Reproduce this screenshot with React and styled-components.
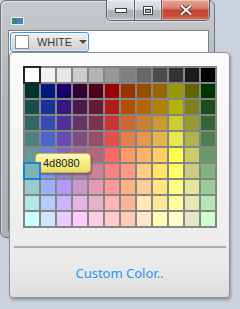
import React from 'react';
import styled, { createGlobalStyle } from 'styled-components';

const GlobalStyle = createGlobalStyle`
    html, body {
        margin: 0;
        padding: 0;
        background: #cbd3df;
    }
`

const RAW = [
    255,255,255, 242,242,242, 230,230,230, 204,204,204, 179,179,179, 153,153,153,
    128,128,128, 102,102,102, 77,77,77, 51,51,51, 26,26,26, 0,0,0,
    0,51,51, 0,26,128, 26,0,104, 51,0,51, 77,0,26, 153,0,0,
    153,51,0, 153,77,0, 153,102,0, 153,153,0, 102,102,0, 0,51,0,
    26,77,77, 26,51,153, 51,26,128, 77,26,77, 102,26,51, 179,26,26,
    179,77,0, 179,102,0, 179,128,0, 179,179,0, 128,128,26, 26,77,26,
    51,102,102, 51,77,179, 77,51,153, 102,51,102, 128,51,77, 204,51,51,
    204,102,51, 204,128,51, 204,153,51, 204,204,51, 153,153,51, 51,102,51,
    77,128,128, 77,102,204, 102,77,179, 128,77,128, 153,77,102, 230,77,77,
    230,128,77, 230,153,77, 230,179,77, 230,230,77, 179,179,77, 77,128,77,
    102,153,153, 102,128,230, 128,102,204, 153,102,153, 179,102,128, 255,102,102,
    255,153,102, 255,179,102, 255,204,102, 255,255,77, 204,204,102, 102,153,102,
    128,179,179, 128,153,255, 153,128,230, 179,128,179, 204,128,153, 255,128,128,
    255,153,128, 255,204,128, 255,230,102, 255,255,102, 204,204,128, 128,179,128,
    153,204,204, 153,179,255, 179,153,255, 204,153,204, 230,153,179, 255,153,153,
    255,179,128, 255,204,153, 255,230,128, 255,255,128, 230,230,153, 153,204,153,
    179,230,230, 179,204,255, 204,179,255, 230,179,230, 230,179,204, 255,179,179,
    255,179,153, 255,230,179, 255,230,153, 255,255,153, 230,230,179, 179,230,179,
    204,255,255, 204,230,255, 230,204,255, 255,204,255, 255,204,230, 255,204,204,
    255,204,179, 255,230,204, 255,255,179, 255,255,204, 230,230,204, 204,255,204,
];

const COLORS = [];
for (let i = 0; i < RAW.length; i += 3) {
    COLORS.push(`rgb(${RAW[i]}, ${RAW[i + 1]}, ${RAW[i + 2]})`);
}

const Desktop = styled.div`
    position: relative;
    width: 240px;
    height: 309px;
    overflow: hidden;
    background: #cbd3df;
`

const Window = styled.div`
    width: 215px;
    height: 238px;
    display: flex;
    flex-direction: column;
    box-sizing: border-box;
    border: 1px solid #6e7379;
    border-radius: 6px;
    background: linear-gradient(#c6cacf, #b2b6bc 40%, #aeb2b8);
    box-shadow: inset 1px 1px 0 rgba(255,255,255,0.45);
`

const TitleBar = styled.div`
    height: 29px;
    display: flex;
    justify-content: space-between;
    align-items: flex-start;
    padding-left: 9px;
    padding-right: 4px;
`

const AppIcon = styled.div`
    margin-top: 11px;
`

const Caption = styled.div`
    display: flex;
    margin-top: -1px;
    border: 1px solid #5c6066;
    border-top: none;
    border-radius: 0 0 5px 5px;
    overflow: hidden;
    box-shadow: 0 1px 0 rgba(255,255,255,0.5);
`

const CapButton = styled.div`
    width: ${p => p.$w}px;
    height: 20px;
    display: flex;
    align-items: center;
    justify-content: center;
    border-left: ${p => p.$first ? 'none' : '1px solid #5c6066'};
    background: ${p => p.$close
        ? 'linear-gradient(#e6a799 0%, #d7816f 40%, #c4432d 52%, #c2503c 80%, #d07a66 100%)'
        : 'linear-gradient(#e4e6e9 0%, #d3d6da 45%, #b1b5ba 52%, #adb1b6 80%, #c3c6ca 100%)'};
    box-shadow: inset 0 0 0 1px rgba(255,255,255,0.35);
`

const Client = styled.div`
    flex: 1;
    margin: 0 5px 6px 7px;
    background: #ffffff;
    border: 1px solid #7a7f86;
    padding: 1px 0 0 1px;
`

const Combo = styled.div`
    width: 79px;
    height: 20px;
    box-sizing: border-box;
    display: flex;
    align-items: center;
    gap: 8px;
    padding-left: 4px;
    border: 1px solid #3d95e0;
    border-radius: 3px;
    background: linear-gradient(#f2f2f2, #dcdcdc 55%, #cfcfcf);
    box-shadow: inset 0 0 0 1px rgba(255,255,255,0.6);
`

const Swatch = styled.div`
    width: 12px;
    height: 12px;
    background: ${p => p.$color};
    border: 1px solid #8c8c8c;
`

const ComboText = styled.span`
    font-family: "Liberation Sans", Arial, sans-serif;
    font-size: 11px;
    color: #3a3a3a;
    letter-spacing: -0.1px;
`

const Arrow = styled.div`
    width: 0;
    height: 0;
    margin-left: -1px;
    border-left: 4px solid transparent;
    border-right: 4px solid transparent;
    border-top: 4px solid #4a4a4a;
`

const Popup = styled.div`
    position: absolute;
    left: 9px;
    top: 52px;
    width: 221px;
    height: 246px;
    box-sizing: border-box;
    padding: 13px 0 0 13px;
    border: 1px solid #8f8f8f;
    border-radius: 4px;
    background: linear-gradient(#fbfbfb, #f0f0f0 60%, #ebebeb 85%, #dedede);
    box-shadow: 1px 2px 3px rgba(0,0,0,0.3);
    display: flex;
    flex-direction: column;
`

const Palette = styled.div`
    display: grid;
    grid-template-columns: repeat(12, 14px);
    grid-auto-rows: 14px;
    gap: 2px;
    padding: 2px;
    width: max-content;
    background: #858585;
`

const Cell = styled.div`
    background: ${p => p.$color};
    outline: ${p => p.$selected ? '2px solid #262626' : p.$hover ? '2px solid #1f7fd8' : 'none'};
    position: relative;
    z-index: ${p => (p.$selected || p.$hover) ? 1 : 0};
`

const Separator = styled.div`
    height: 2px;
    width: 212px;
    margin: 18px 0 0 -9px;
    background: #adadad;
`

const CustomLink = styled.div`
    margin: 16px 0 0 -13px;
    text-align: center;
    font-family: "Noto Sans", "Open Sans", sans-serif;
    font-size: 13px;
    color: #2797f5;
`

const Tooltip = styled.div`
    position: absolute;
    left: 35px;
    top: 153px;
    width: 56px;
    height: 20px;
    box-sizing: border-box;
    display: flex;
    align-items: center;
    padding-left: 7px;
    border: 1px solid #c4b748;
    border-radius: 4px;
    background: linear-gradient(#fdf8b8, #f5ec88 50%, #ebdf62);
    box-shadow: 1px 2px 2px rgba(0,0,0,0.3);
    font-family: "Liberation Sans", Arial, sans-serif;
    font-size: 11px;
    color: #222;
`

export default function App() {
    return (
        <Desktop>
            <GlobalStyle />
            <Window>
                <TitleBar>
                    <AppIcon>
                        <svg width="15" height="10" viewBox="0 0 15 10">
                            <rect x="0" y="0" width="15" height="10" fill="#e8ecef" stroke="#9aa3ab" />
                            <rect x="2" y="2" width="5" height="6" fill="#3a8a7a" />
                            <rect x="7" y="2" width="6" height="6" fill="#4f7fb8" />
                        </svg>
                    </AppIcon>
                    <Caption>
                        <CapButton $w={27} $first>
                            <svg width="12" height="5" viewBox="0 0 12 5">
                                <rect x="0.5" y="0.5" width="11" height="4" fill="#fff" stroke="#3c4046" />
                            </svg>
                        </CapButton>
                        <CapButton $w={26}>
                            <svg width="10" height="9" viewBox="0 0 10 9">
                                <rect x="0.5" y="0.5" width="9" height="8" fill="none" stroke="#3c4046" />
                                <rect x="1.5" y="1.5" width="7" height="6" fill="none" stroke="#fff" />
                                <rect x="2.5" y="3.5" width="5" height="3" fill="none" stroke="#3c4046" />
                            </svg>
                        </CapButton>
                        <CapButton $w={47} $close>
                            <svg width="12" height="10" viewBox="0 0 12 10">
                                <path d="M1.5 1 L10.5 9 M10.5 1 L1.5 9" stroke="#4a1e18" strokeWidth="3.6" strokeLinecap="square" />
                                <path d="M1.5 1 L10.5 9 M10.5 1 L1.5 9" stroke="#ffffff" strokeWidth="2" strokeLinecap="square" />
                            </svg>
                        </CapButton>
                    </Caption>
                </TitleBar>
                <Client>
                    <Combo>
                        <Swatch $color="#ffffff" />
                        <ComboText>WHITE</ComboText>
                        <Arrow />
                    </Combo>
                </Client>
            </Window>
            <Popup>
                <Palette>
                    {COLORS.map((c, i) => (
                        <Cell key={i} $color={c} $selected={i === 0} $hover={i === 72} />
                    ))}
                </Palette>
                <Separator />
                <CustomLink>Custom Color..</CustomLink>
            </Popup>
            <Tooltip>4d8080</Tooltip>
        </Desktop>
    );
}
